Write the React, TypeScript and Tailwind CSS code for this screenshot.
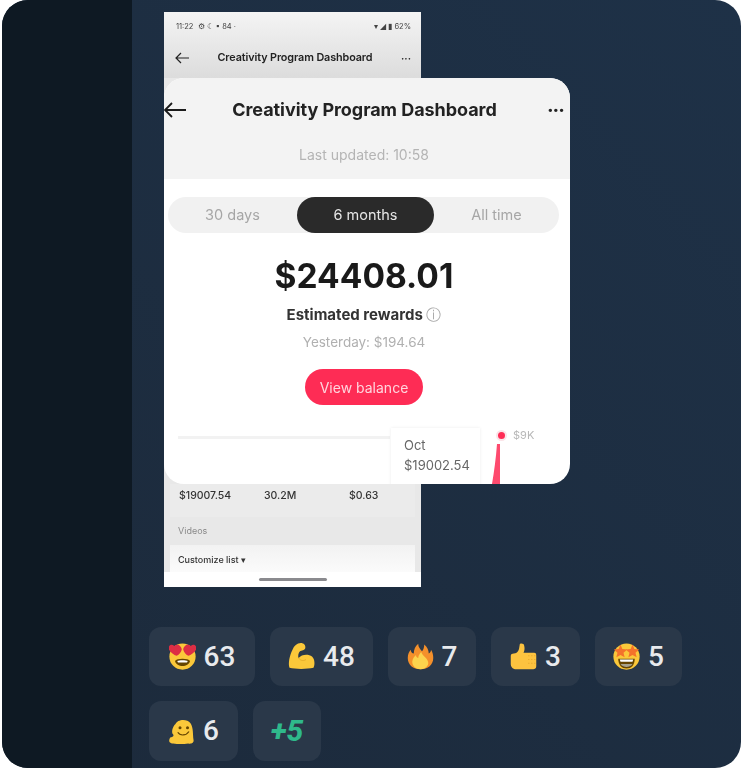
import React from "react";

const Face = ({ children }: { children?: React.ReactNode }) => (
  <svg viewBox="0 0 36 36" className="w-[27px] h-[27px] shrink-0">
    <circle cx="18" cy="18" r="17.5" fill="#fbc83a" />
    {children}
  </svg>
);

const HeartEyes = () => (
  <Face>
    <path d="M8 24 C10 20 26 20 28 24 C26 33 10 33 8 24Z" fill="#664500" />
    <path d="M11 24 C14 22.5 22 22.5 25 24 L24 26 L12 26Z" fill="#fff" />
    <path d="M17 9 C17 3 10 0 7 4 C3 0 -2 4 0 9 C2 13 7 16 10 17 C13 16 16 13 17 9Z" fill="#dd2e44" />
    <path d="M19 9 C19 3 26 0 29 4 C33 0 38 4 36 9 C34 13 29 16 26 17 C23 16 20 13 19 9Z" fill="#dd2e44" />
  </Face>
);

const StarEyes = () => (
  <Face>
    <path d="M7 21 H29 C29 30 24 34 18 34 C12 34 7 30 7 21Z" fill="#664500" />
    <path d="M9 22 H27 L26 25 H10Z" fill="#fff" />
    <path d="M10 28 H26 C24 31 21 32 18 32 C15 32 12 31 10 28Z" fill="#a8a28c" />
    <path d="M10 2 L12.5 8 L19 8.5 L14 13 L15.5 19 L10 16 L4.5 19 L6 13 L1 8.5 L7.5 8Z" fill="#f4722b" />
    <path d="M26 2 L28.5 8 L35 8.5 L30 13 L31.5 19 L26 16 L20.5 19 L22 13 L17 8.5 L23.5 8Z" fill="#f4722b" />
  </Face>
);

const Muscle = () => (
  <svg viewBox="0 0 36 36" className="w-[27px] h-[27px] shrink-0">
    <path d="M2 33 C0 27 2 17 6 9 C8 4 12 0 17 0 C21 0 24 3 23 7 C22 10 18 10 16 11 C14 13 13 17 14 20 C18 15 27 14 32 18 C36 22 36 29 34 33 C25 35 10 35 2 33Z" fill="#fbc83a" />
    <path d="M14 20 C17 24 21 24 24 22" stroke="#e0a526" strokeWidth="1" fill="none" />
  </svg>
);

const Fire = () => (
  <svg viewBox="0 0 36 36" className="w-[27px] h-[27px] shrink-0">
    <path d="M18 35 C8 35 1 29 1 20 C1 15 3 11 5 9 C5 12 7 14 9 14 C9 9 11 4 15 1 C15 6 18 8 20 11 C22 9 23 5 23 2 C27 5 29 10 29 14 C31 13 32 11 32 9 C34 12 35 16 35 20 C35 29 28 35 18 35Z" fill="#f4902b" />
    <path d="M18 35 C12 35 7 31 7 25 C7 21 10 18 12 16 C12 19 14 20 15 20 C15 17 17 14 19 12 C20 16 24 18 26 21 C28 24 29 26 28 29 C26 33 22 35 18 35Z" fill="#fcd34d" />
  </svg>
);

const Thumb = () => (
  <svg viewBox="0 0 36 36" className="w-[27px] h-[27px] shrink-0">
    <path d="M1 17 C1 15 3 14 5 14 C8 14 11 12 12 8 L13 2 C13 0 19 0 19 4 C20 8 19 11 18 13 H32 C35 13 35 15 35 17 V31 C35 34 33 35 31 35 H8 C4 35 1 32 1 28Z" fill="#fdc33f" />
    <path d="M24 17 H34 M24 22 H34 M24 27 H34" stroke="#e3a62e" strokeWidth="1" strokeDasharray="2 2" />
  </svg>
);

const Hugging = () => (
  <svg viewBox="0 0 36 36" className="w-[27px] h-[27px] shrink-0">
    <path d="M10 8 C12 2 25 0 30 7 C34 13 33 22 34 29 C35 33 31 35 27 34 C20 35 13 35 7 34 C2 34 0 31 3 26 C7 25 8 24 7 22 C4 20 6 11 10 8Z" fill="#fbc83a" />
    <circle cx="16" cy="13" r="2" fill="#664500" />
    <circle cx="26" cy="13" r="2" fill="#664500" />
    <path d="M13 19 C16 24 24 24 28 18" stroke="#664500" strokeWidth="1.6" fill="none" />
  </svg>
);

const chip = "rounded-xl bg-[#2a3849] flex items-center justify-center gap-2 leading-none font-['Roboto',sans-serif]";

const PhoneBehind = () => (
  <div className="w-[257px] h-[575px] flex flex-col bg-[#e8e8e8] overflow-hidden font-['Inter',sans-serif] blur-[0.7px]">
    <div className="h-[66px] shrink-0 bg-gradient-to-b from-[#f4f4f4] to-[#dcdcdc]">
      <div className="flex items-center justify-between pl-3 pr-[10px] pt-[10px] text-[7.5px] leading-[10px] text-[#444]">
        <span>11:22 &nbsp;⚙ ☾ ▪ 84 ·</span>
        <span>▾ ◢ ▮ 62%</span>
      </div>
      <div className="flex items-center justify-between pl-[11px] pr-[10px] pt-[19px]">
        <svg viewBox="0 0 14 12" className="w-[14px] h-[12px]" fill="none" stroke="#222" strokeWidth="1.2">
          <path d="M14 6H1M6 1 1 6l5 5" />
        </svg>
        <span className="text-[10.8px] leading-[14px] font-semibold text-[#222] tracking-[-0.1px]">Creativity Program Dashboard</span>
        <span className="text-[10px] leading-[14px] font-bold text-[#222]">···</span>
      </div>
    </div>
    <div className="h-[406px] shrink-0" />
    <div className="bg-[#ebebeb] mx-[6px] h-[33px] shrink-0 pl-[9px] pt-[6px] flex text-[10.5px] leading-[12px] font-medium text-[#333]">
      <span className="w-[85px]">$19007.54</span>
      <span className="w-[85px]">30.2M</span>
      <span>$0.63</span>
    </div>
    <div className="h-[28px] shrink-0 flex items-center pl-[14px] text-[9px] text-[#8a8a8a]">Videos</div>
    <div className="mx-[6px] flex-1 bg-gradient-to-b from-[#f2f2f2] to-[#fbfbfb] pl-[8px] pt-[9px] text-[9px] leading-[12px] font-medium text-[#333]">
      Customize list ▾
    </div>
    <div className="h-[15px] shrink-0 bg-white flex items-center justify-center">
      <div className="w-[68px] h-[3px] rounded-full bg-[#8a8a8e]" />
    </div>
  </div>
);

const FrontCard = () => (
  <div className="absolute left-0 top-[66px] w-[406px] h-[406px] rounded-[20px] overflow-hidden bg-white flex flex-col font-['Inter',sans-serif] blur-[0.7px]">
    <div className="h-[101px] shrink-0 bg-[#f3f3f3] flex flex-col items-center pr-[6px]">
      <div className="w-full h-[64px] flex items-center justify-between">
        <svg viewBox="0 0 22 16" className="w-[22px] h-[16px]" fill="none" stroke="#1a1a1a" strokeWidth="1.8">
          <path d="M22 8H1M8 1 1 8l7 7" />
        </svg>
        <span className="text-[18px] leading-6 font-bold text-[#222] tracking-[-0.05px] mr-[4px]">Creativity Program Dashboard</span>
        <span className="text-[20px] leading-6 font-bold text-[#222] tracking-[-1px]">···</span>
      </div>
      <span className="text-[14px] leading-4 text-[#b4b4b4] mt-[5px]">Last updated: 10:58</span>
    </div>
    <div className="ml-[4px] w-[391px] mt-[18px] h-[36px] shrink-0 rounded-full bg-[#f1f1f1] flex items-center text-[14.5px] text-[#a6a6a6]">
      <span className="w-[129px] text-center">30 days</span>
      <span className="w-[137px] h-full rounded-full bg-[#2a2a2a] text-[#e6e6e6] flex items-center justify-center">6 months</span>
      <span className="flex-1 text-center">All time</span>
    </div>
    <div className="w-[400px] mt-[20px] text-center text-[33.5px] leading-[46px] font-bold text-[#1a1a1a]">$24408.01</div>
    <div className="w-[400px] mt-[6px] text-center text-[15px] leading-5 font-bold text-[#333]">
      Estimated rewards <span className="font-normal text-[#aaa]">ⓘ</span>
    </div>
    <div className="w-[400px] mt-[9px] text-center text-[13.5px] leading-4 text-[#b0b0b0]">Yesterday: $194.64</div>
    <div className="ml-[141px] mt-[19px] w-[118px] h-[36px] shrink-0 rounded-full bg-[#fe2c55] text-[#ffd5dd] text-[14px] flex items-center justify-center">
      View balance
    </div>
    <div className="relative flex-1">
      <div className="mt-[31px] ml-[14px] w-[212px] h-[3px] bg-[#f2f2f2]" />
      <div className="absolute left-[227px] top-[23px] w-[89px] h-[60px] bg-white shadow-[0_0_3px_rgba(0,0,0,0.08)] pl-[13px] pt-[7px] text-[13px] leading-[20px] text-[#666]">
        <div>Oct</div>
        <div>$19002.54</div>
      </div>
      <div className="absolute left-[332px] top-[25px] w-[11px] h-[11px] rounded-full bg-[#fe2c55] border-2 border-[#fbe3e8]" />
      <svg viewBox="0 0 10 40" className="absolute left-[327px] top-[39px] w-[10px] h-[40px]">
        <path d="M6 0 H9 V40 H1 C3 28 5 14 6 0Z" fill="#fe4a6e" />
      </svg>
      <span className="absolute left-[349px] top-[22px] text-[11px] leading-4 text-[#b8b8b8]">$9K</span>
    </div>
  </div>
);

export default function App() {
  return (
    <div className="w-[741px] h-[768px] bg-white pl-[2px]">
      <div className="w-[739px] h-[768px] rounded-[26px] overflow-hidden flex bg-gradient-to-tr from-[#1c2a3b] to-[#1e3147]">
        <div className="w-[130px] shrink-0 bg-[#0e1923]" />
        <div className="flex-1 flex flex-col">
          <div className="relative mt-[12px] ml-[32px] w-[406px]">
            <PhoneBehind />
            <FrontCard />
          </div>
          <div className="mt-[40px] ml-[17px] w-[540px] flex flex-wrap gap-[15px]">
            <div className={`${chip} w-[106px] h-[59px] text-[28px] font-medium text-[#e8eaed]`}><HeartEyes />63</div>
            <div className={`${chip} w-[103px] h-[59px] text-[28px] font-medium text-[#e8eaed]`}><Muscle />48</div>
            <div className={`${chip} w-[88px] h-[59px] text-[28px] font-medium text-[#e8eaed]`}><Fire />7</div>
            <div className={`${chip} w-[89px] h-[59px] text-[28px] font-medium text-[#e8eaed]`}><Thumb />3</div>
            <div className={`${chip} w-[87px] h-[59px] text-[28px] font-medium text-[#e8eaed]`}><StarEyes />5</div>
            <div className={`${chip} w-[89px] h-[60px] text-[28px] font-medium text-[#e8eaed]`}><Hugging />6</div>
            <div className={`${chip} w-[68px] h-[60px] text-[30px] text-[#2fb98b] font-extrabold italic`}>+5</div>
          </div>
        </div>
      </div>
    </div>
  );
}
